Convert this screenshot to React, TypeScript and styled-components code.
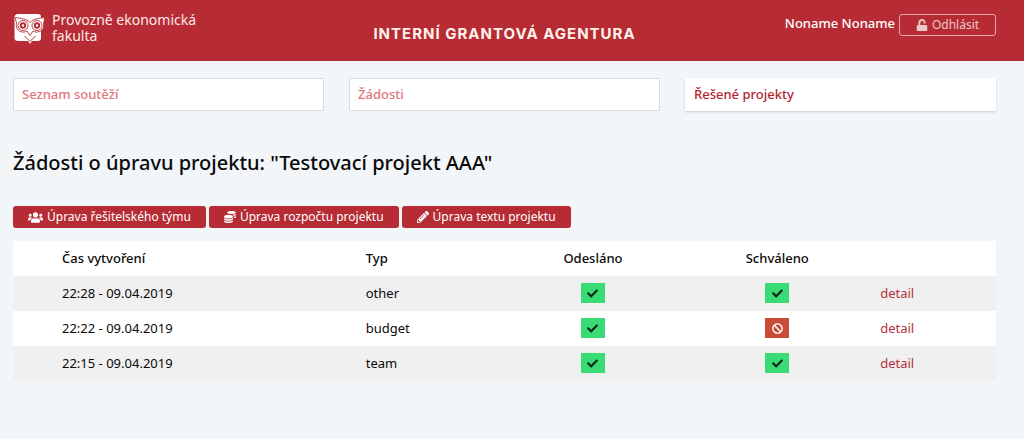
import React from 'react';
import styled, { createGlobalStyle } from 'styled-components';
import { FaBan, FaCheck, FaCoins, FaPencilAlt, FaUnlock, FaUsers } from 'react-icons/fa';

const Global = createGlobalStyle`
  *, *::before, *::after { box-sizing: border-box; }
  body {
    margin: 0;
    background: #f3f6f9;
    color: #0a0a0a;
    font: 13px/20px "Noto Sans", "Open Sans", sans-serif;
  }
`;

const Header = styled.header`
  display: grid;
  grid-template-columns: 1fr auto 1fr;
  min-height: 61px;
  padding: 12px 28px 12px 13px;
  background: #b62b34;
  color: #fff;
`;

const Brand = styled.a`
  display: flex;
  align-items: flex-start;
  gap: 7px;
  color: #fbe9e7;
  text-decoration: none;
`;

const BrandName = styled.span`
  display: flex;
  flex-direction: column;
  font-size: 14px;
  line-height: 16px;
`;

const SiteTitle = styled.p`
  margin: 0;
  padding-top: 12px;
  color: #fff3ea;
  font: 700 15px/20px Inter, sans-serif;
  letter-spacing: 1px;
  text-transform: uppercase;
`;

const Account = styled.div`
  display: flex;
  justify-content: flex-end;
  align-items: flex-start;
  gap: 4px;
  font-weight: 500;
  line-height: 22px;
`;

const LogoutButton = styled.button`
  display: flex;
  justify-content: center;
  align-items: center;
  gap: 4px;
  width: 97px;
  height: 22px;
  margin-top: 2px;
  padding: 0;
  border: 1px solid #e8a5a6;
  border-radius: 3px;
  background: transparent;
  color: #ecc8c8;
  font: 12px/20px "Noto Sans", sans-serif;
`;

const Main = styled.main`
  padding: 17px 28px 40px 13px;
`;

const Tabs = styled.nav`
  display: grid;
  grid-template-columns: repeat(3, 1fr);
  gap: 25px;
`;

const Tab = styled.a<{ $active?: boolean }>`
  padding: 5px 8px 6px;
  border: 1px solid ${(p) => (p.$active ? '#fff' : '#dadde0')};
  background: #fff;
  box-shadow: ${(p) => (p.$active ? '0 1px 2px rgba(0, 0, 0, 0.16)' : 'none')};
  color: ${(p) => (p.$active ? '#b3232f' : '#df7780')};
  font-weight: 500;
  text-decoration: none;
`;

const Heading = styled.h1`
  margin: 38px 0 29px;
  font-size: 20px;
  font-weight: 500;
  line-height: 28px;
`;

const Actions = styled.div`
  display: flex;
  flex-wrap: wrap;
  gap: 3px;
  margin-bottom: 13px;
`;

const ActionButton = styled.button`
  display: flex;
  align-items: center;
  gap: 4px;
  height: 22px;
  padding: 0 15px;
  border: 0;
  border-radius: 3px;
  background: #b62b34;
  color: #fff;
  font: 12px/20px "Noto Sans", sans-serif;
  white-space: nowrap;
`;

const Table = styled.table`
  width: 100%;
  border-collapse: collapse;
  table-layout: fixed;
  background: #fff;

  tbody tr:nth-child(odd) { background: #f0f0f0; }
`;

const Col = styled.col<{ $width: number }>`
  width: ${(p) => p.$width}%;
`;

const HeadCell = styled.th<{ $align?: string; $indent?: number }>`
  height: 35px;
  padding: 0 0 2px ${(p) => p.$indent ?? 0}px;
  font-weight: 500;
  text-align: ${(p) => p.$align ?? 'left'};
`;

const Cell = styled.td<{ $align?: string; $indent?: number }>`
  height: 35px;
  padding: 0 0 2px ${(p) => p.$indent ?? 0}px;
  text-align: ${(p) => p.$align ?? 'left'};
`;

const Status = styled.span<{ $ok: boolean }>`
  display: inline-flex;
  justify-content: center;
  align-items: center;
  width: 24px;
  height: 20px;
  background: ${(p) => (p.$ok ? '#39db76' : '#cb4b39')};
  color: ${(p) => (p.$ok ? '#062a14' : '#fff')};
  font-size: 11px;
  vertical-align: middle;
`;

const DetailLink = styled.a`
  color: #b3323e;
  text-decoration: none;
`;

const OwlLogo = () => (
  <svg width="32" height="33" viewBox="0 0 32 33" aria-hidden="true">
    <path
      fill="#fff"
      d="M5 2h20a3 3 0 0 1 3 3v21a3 3 0 0 1-3 3h-6l-2 3-2-3H5a3.500 3.500 0 0 1-3.500-3.500V5.500A3.500 3.500 0 0 1 5 2z"
    />
    <path
      fill="#fff"
      stroke="#b62b34"
      strokeWidth="0.9"
      d="M2.500 5.500c5 1 11 1 14.500 5c3.500-4 9-4 14.500-5c0 3-.5 4-1 5c1 5-1 9-6 9.500c-2 .3-3.500-.3-4.500-1l-3 4.500l-3-4.500c-1 .7-2.500 1.300-4.500 1c-5-.5-7-4.500-6-9.500c-.5-1-1-2-1-5z"
    />
    <g fill="none" stroke="#b62b34">
      <circle cx="10" cy="13.500" r="5" strokeWidth="0.9" />
      <circle cx="24" cy="13.500" r="5" strokeWidth="0.9" />
      <circle cx="10" cy="13.500" r="2.200" strokeWidth="1.900" />
      <circle cx="24" cy="13.500" r="2.200" strokeWidth="1.900" />
      <path d="M11.500 24l5.500 5.500l5.500-5.500" />
    </g>
  </svg>
);

const requests = [
  { time: '22:28 - 09.04.2019', type: 'other', sent: true, approved: true },
  { time: '22:22 - 09.04.2019', type: 'budget', sent: true, approved: false },
  { time: '22:15 - 09.04.2019', type: 'team', sent: true, approved: true },
];

const StatusBadge = ({ ok }: { ok: boolean }) => (
  <Status $ok={ok} role="img" aria-label={ok ? 'Ano' : 'Ne'}>
    {ok ? <FaCheck /> : <FaBan />}
  </Status>
);

export default function App() {
  return (
    <>
      <Global />
      <Header>
        <Brand href="#">
          <OwlLogo />
          <BrandName>
            <span>Provozně ekonomická</span>
            <span>fakulta</span>
          </BrandName>
        </Brand>
        <SiteTitle>Interní grantová agentura</SiteTitle>
        <Account>
          <span>Noname Noname</span>
          <LogoutButton type="button">
            <FaUnlock size={12} />
            Odhlásit
          </LogoutButton>
        </Account>
      </Header>
      <Main>
        <Tabs>
          <Tab href="#souteze">Seznam soutěží</Tab>
          <Tab href="#zadosti">Žádosti</Tab>
          <Tab href="#projekty" $active aria-current="page">
            Řešené projekty
          </Tab>
        </Tabs>
        <Heading>Žádosti o úpravu projektu: "Testovací projekt AAA"</Heading>
        <Actions>
          <ActionButton type="button">
            <FaUsers size={15} />
            Úprava řešitelského týmu
          </ActionButton>
          <ActionButton type="button">
            <FaCoins size={12} />
            Úprava rozpočtu projektu
          </ActionButton>
          <ActionButton type="button">
            <FaPencilAlt size={12} />
            Úprava textu projektu
          </ActionButton>
        </Actions>
        <Table>
          <colgroup>
            <Col $width={31} />
            <Col $width={18.5} />
            <Col $width={19} />
            <Col $width={18.5} />
            <Col $width={13} />
          </colgroup>
          <thead>
            <tr>
              <HeadCell $indent={49}>Čas vytvoření</HeadCell>
              <HeadCell $indent={48}>Typ</HeadCell>
              <HeadCell $align="center">Odesláno</HeadCell>
              <HeadCell $align="center">Schváleno</HeadCell>
              <HeadCell aria-label="Detail" />
            </tr>
          </thead>
          <tbody>
            {requests.map((r) => (
              <tr key={r.time}>
                <Cell $indent={49}>{r.time}</Cell>
                <Cell $indent={48}>{r.type}</Cell>
                <Cell $align="center">
                  <StatusBadge ok={r.sent} />
                </Cell>
                <Cell $align="center">
                  <StatusBadge ok={r.approved} />
                </Cell>
                <Cell $indent={12}>
                  <DetailLink href="#detail">detail</DetailLink>
                </Cell>
              </tr>
            ))}
          </tbody>
        </Table>
      </Main>
    </>
  );
}
